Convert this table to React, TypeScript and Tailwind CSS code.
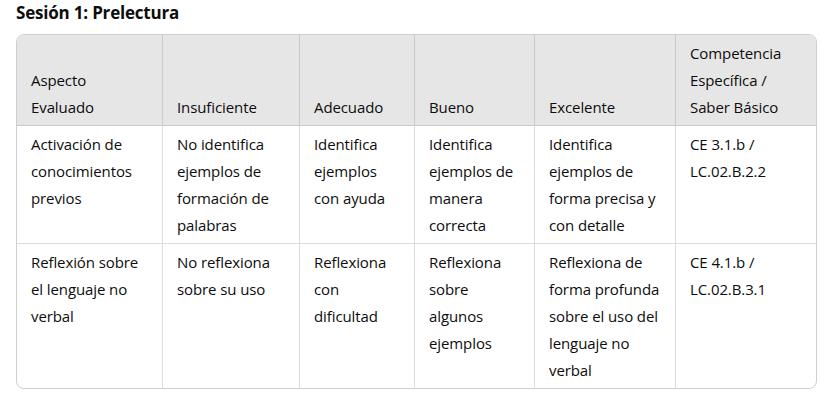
const header = [
  ["Aspecto", "Evaluado"],
  ["Insuficiente"],
  ["Adecuado"],
  ["Bueno"],
  ["Excelente"],
  ["Competencia", "Específica /", "Saber Básico"],
];

const rows = [
  [
    ["Activación de", "conocimientos", "previos"],
    ["No identifica", "ejemplos de", "formación de", "palabras"],
    ["Identifica", "ejemplos", "con ayuda"],
    ["Identifica", "ejemplos de", "manera", "correcta"],
    ["Identifica", "ejemplos de", "forma precisa y", "con detalle"],
    ["CE 3.1.b /", "LC.02.B.2.2"],
  ],
  [
    ["Reflexión sobre", "el lenguaje no", "verbal"],
    ["No reflexiona", "sobre su uso"],
    ["Reflexiona", "con", "dificultad"],
    ["Reflexiona", "sobre", "algunos", "ejemplos"],
    ["Reflexiona de", "forma profunda", "sobre el uso del", "lenguaje no", "verbal"],
    ["CE 4.1.b /", "LC.02.B.3.1"],
  ],
];

function Lines({ lines }: { lines: string[] }) {
  return (
    <>
      {lines.map((l, i) => (
        <span key={i} className="block whitespace-nowrap">
          {l}
        </span>
      ))}
    </>
  );
}

export default function App() {
  return (
    <div
      className="w-[832px] h-[410px] bg-white px-4 text-[#0d0d0d]"
      style={{ fontFamily: '"Open Sans", "Noto Sans", sans-serif' }}
    >
      <h2 className="pt-[1px] text-[17px] leading-[24px] font-bold mb-[9px] tracking-[-0.2px]">Sesión 1: Prelectura</h2>

      <div className="w-[801px] border border-[#cfcfcf] rounded-lg overflow-hidden">
        <div className="grid grid-cols-[145px_137px_115px_120px_141px_141px] text-[15px] leading-[27px] tracking-[-0.1px]">
          {header.map((h, i) => (
            <div
              key={i}
              className={
                "bg-[#e6e6e6] px-[14px] pt-[5px] pb-[4px] flex flex-col justify-end font-medium " +
                (i > 0 ? "border-l border-[#c9c9c9]" : "")
              }
            >
              <Lines lines={h} />
            </div>
          ))}
          {rows.map((r, ri) =>
            r.map((c, ci) => (
              <div
                key={ri + "-" + ci}
                className={
                  "border-t px-[14px] pt-[5px] pb-[4px] " +
                  (ri === 0 ? "border-[#c9c9c9] " : "border-[#dcdcdc] ") +
                  (ci > 0 ? "border-l border-l-[#dcdcdc]" : "")
                }
              >
                <Lines lines={c} />
              </div>
            ))
          )}
        </div>
      </div>
    </div>
  );
}
